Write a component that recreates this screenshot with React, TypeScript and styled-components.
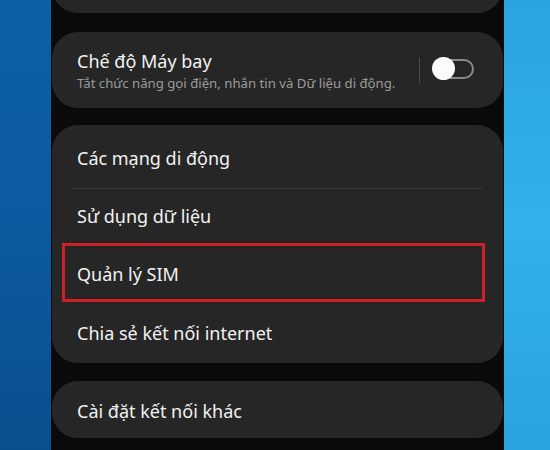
import React from "react";
import styled, { createGlobalStyle } from "styled-components";

const Global = createGlobalStyle`
  html, body { margin: 0; padding: 0; background: #0a0a0a; }
  body { font-family: "Noto Sans", "Open Sans", sans-serif; }
  * { box-sizing: border-box; }
`;

const Frame = styled.div`
  width: 550px;
  height: 450px;
  display: flex;
  overflow: hidden;
`;

const SideLeft = styled.div`
  width: 51px;
  flex: none;
  background: linear-gradient(180deg, #0e5fa6 0%, #0c5a9f 50%, #0a4f8d 100%);
`;

const SideRight = styled.div`
  width: 46px;
  flex: none;
  background: linear-gradient(180deg, #2aa3df 0%, #31b0ea 50%, #2aa2de 100%);
`;

const Phone = styled.div`
  width: 453px;
  flex: none;
  background: #0a0a0a;
  padding: 0 1px;
  display: flex;
  flex-direction: column;
  overflow: hidden;
`;

const Card = styled.div<{ $mt?: number }>`
  background: #262626;
  border-radius: 26px;
  margin-top: ${(p) => p.$mt ?? 0}px;
  flex: none;
`;

const StubCard = styled(Card)`
  height: 60px;
`;

const ToggleCard = styled(Card)`
  display: flex;
  align-items: center;
  padding: 17px 29px 17px 25px;
`;

const TextBlock = styled.div`
  flex: 1;
  min-width: 0;
`;

const Title = styled.div`
  font-size: 18px;
  line-height: 24px;
  color: #f2f2f2;
  white-space: nowrap;
`;

const Subtitle = styled.div`
  font-size: 13.2px;
  line-height: 16px;
  color: #9b9b9b;
  margin-top: 2px;
  white-space: nowrap;
`;

const VDivider = styled.div`
  width: 1px;
  height: 25px;
  background: #4a4a4a;
  margin: 0 12px 0 0;
  flex: none;
`;

const Switch = styled.div`
  position: relative;
  width: 42px;
  height: 23px;
  flex: none;
  display: flex;
  align-items: center;
  margin-top: -3px;
`;

const Track = styled.div`
  margin-left: 2px;
  width: 40px;
  height: 20px;
  border-radius: 10px;
  border: 2px solid #8a8a8a;
  background: #262626;
`;

const Knob = styled.div`
  position: absolute;
  left: 0;
  top: 0;
  width: 23px;
  height: 23px;
  border-radius: 50%;
  background: #fbfbfb;
`;

const Row = styled.div<{ $pt: number; $h: number }>`
  position: relative;
  height: ${(p) => p.$h}px;
  padding: ${(p) => p.$pt}px 25px 0 25px;
`;

const HDivider = styled.div`
  height: 1px;
  background: #3c3c3c;
  margin: 0 21px;
`;

const Highlight = styled.div`
  position: absolute;
  left: 10px;
  right: 18px;
  top: -4px;
  bottom: 3px;
  border: 3px solid #cf1f27;
  pointer-events: none;
`;

const ListCard = styled(Card)`
  padding-bottom: 0;
`;

export default function App() {
  return (
    <>
      <Global />
      <Frame>
        <SideLeft />
        <Phone>
          <StubCard $mt={-47} />
          <ToggleCard $mt={19}>
            <TextBlock>
              <Title>Chế độ Máy bay</Title>
              <Subtitle>Tắt chức năng gọi điện, nhắn tin và Dữ liệu di động.</Subtitle>
            </TextBlock>
            <VDivider />
            <Switch>
              <Track />
              <Knob />
            </Switch>
          </ToggleCard>
          <ListCard $mt={17}>
            <Row $pt={21} $h={63}>
              <Title>Các mạng di động</Title>
            </Row>
            <HDivider />
            <Row $pt={15} $h={58}>
              <Title>Sử dụng dữ liệu</Title>
            </Row>
            <Row $pt={15} $h={58}>
              <Highlight />
              <Title>Quản lý SIM</Title>
            </Row>
            <Row $pt={16} $h={58}>
              <Title>Chia sẻ kết nối internet</Title>
            </Row>
          </ListCard>
          <Card $mt={18}>
            <Row $pt={18} $h={57}>
              <Title>Cài đặt kết nối khác</Title>
            </Row>
          </Card>
        </Phone>
        <SideRight />
      </Frame>
    </>
  );
}
